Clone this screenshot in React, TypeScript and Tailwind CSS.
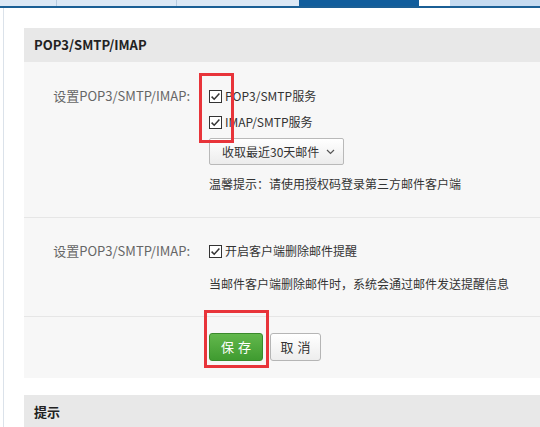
import React from 'react';

const font = { fontFamily: '"Microsoft YaHei", "Noto Sans CJK SC", "Noto Sans", sans-serif' };

function Check({ label }: { label: string }) {
  return (
    <label className="flex h-[26px] items-center whitespace-nowrap text-[12px] text-[#333]">
      <svg width="13" height="13" viewBox="0 0 13 13" className="mr-[3px] shrink-0">
        <rect x="0.5" y="0.5" width="12" height="12" fill="#fff" stroke="#333" />
        <path d="M2.6 6.6 L5.2 9.2 L10.4 3.4" fill="none" stroke="#333" strokeWidth="1.5" />
      </svg>
      {label}
    </label>
  );
}

function Row({ children, className }: { children: React.ReactNode; className: string }) {
  return (
    <div className={`flex border-b border-[#e6e6e6] ${className}`}>
      <div className="w-[185px] shrink-0 whitespace-nowrap pr-[19px] pt-[5px] text-right text-[13px] leading-[16px] text-[#666]">
        设置POP3/SMTP/IMAP:
      </div>
      <div className="flex flex-col">{children}</div>
    </div>
  );
}

export default function App() {
  return (
    <div className="relative h-[427px] w-[540px] overflow-hidden bg-white" style={font}>
      {/* top tab strip */}
      <div className="flex h-[6px] bg-[#dce8f5]">
        <div className="w-[57px] border-r border-[#b7cbe0]" />
        <div className="w-[120px] border-r border-[#b7cbe0]" />
        <div className="w-[122px]" />
        <div className="w-[120px] bg-[#115d9c]" />
        <div className="w-[31px] bg-white" />
        <div className="flex-1 bg-[#c6dbf1]" />
      </div>
      <div className="h-[2px] bg-[#1b5f95]" />

      <div className="flex">
        <div className="ml-[3px] w-px self-stretch bg-[#dbe2ea]" />
        <div className="ml-[20px] flex-1 pt-[20px]">
          {/* panel */}
          <div className="bg-[#f7f7f7]">
            <div className="flex h-[34px] items-center bg-[#e8e8e8] px-[10px] text-[13px] font-bold text-[#222]">
              POP3/SMTP/IMAP
            </div>

            <Row className="pt-[21px] pb-[23px]">
              <Check label="POP3/SMTP服务" />
              <Check label="IMAP/SMTP服务" />
              <button className="mt-[3px] flex h-[27px] w-[135px] items-center justify-between whitespace-nowrap rounded-[2px] border border-[#b9b9b9] bg-gradient-to-b from-white to-[#ececec] pl-[12px] pr-[8px] text-[12px] text-[#333]">
                收取最近30天邮件
                <svg width="9" height="6" viewBox="0 0 9 6">
                  <path d="M1 1 L4.5 4.5 L8 1" fill="none" stroke="#555" strokeWidth="1.2" />
                </svg>
              </button>
              <div className="mt-[9px] whitespace-nowrap text-[12px] leading-[20px] text-[#333]">温馨提示：请使用授权码登录第三方邮件客户端</div>
            </Row>

            <Row className="pt-[20px] pb-[22px]">
              <Check label="开启客户端删除邮件提醒" />
              <div className="mt-[10px] whitespace-nowrap text-[12px] leading-[20px] text-[#333]">当邮件客户端删除邮件时，系统会通过邮件发送提醒信息</div>
            </Row>

            <div className="flex gap-[7px] pl-[185px] pt-[16px] pb-[17px]">
              <button className="h-[28px] w-[54px] rounded-[3px] border border-[#3a8a2c] bg-gradient-to-b from-[#62b84c] to-[#3f9b30] pl-[4px] text-[13px] tracking-[4px] text-white">
                保存
              </button>
              <button className="h-[28px] w-[51px] rounded-[3px] border border-[#b5b5b5] bg-gradient-to-b from-white to-[#ededed] pl-[4px] text-[13px] tracking-[4px] text-[#333]">
                取消
              </button>
            </div>
          </div>

          <div className="mt-[17px] flex h-[34px] items-center bg-[#e8e8e8] px-[10px] text-[13px] font-bold text-[#222]">
            提示
          </div>
        </div>
      </div>

      {/* red annotation boxes */}
      <div className="pointer-events-none absolute left-[199px] top-[73px] h-[70px] w-[35px] border-[3px] border-[#e8343a]" />
      <div className="pointer-events-none absolute left-[204px] top-[310px] h-[58px] w-[65px] border-[3px] border-[#e8343a]" />
    </div>
  );
}
